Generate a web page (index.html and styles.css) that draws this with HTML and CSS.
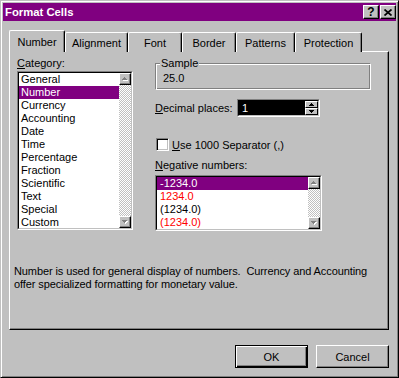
FILE: index.html
```html
<!doctype html>
<html lang="en">
    <head>
        <meta charset="UTF-8" />
        <title>Format Cells</title>
        <link rel="stylesheet" href="styles.css">
    </head>
    <body>
        <div class="window">
            <!-- Title bar -->
            <div class="titlebar">
                <span class="title">Format Cells</span>
                <div class="title-buttons">
                    <button class="title-btn help">?</button>
                    <button class="title-btn">
                        <svg width="8" height="7" viewBox="0 0 8 7">
                            <path d="M0.5 0.5 L7.5 6.5 M7.5 0.5 L0.5 6.5" stroke="#000" stroke-width="1.7" />
                        </svg>
                    </button>
                </div>
            </div>

            <div class="dialog-body">
                <!-- Tabs -->
                <div class="tabs">
                    <div class="tab selected w-number">Number</div>
                    <div class="tab w-alignment">Alignment</div>
                    <div class="tab w-font">Font</div>
                    <div class="tab w-border">Border</div>
                    <div class="tab w-patterns">Patterns</div>
                    <div class="tab w-protection">Protection</div>
                </div>

                <div class="panel">
                    <div class="panel-main">
                        <!-- Category list -->
                        <div class="left-col">
                            <div class="label"><u>C</u>ategory:</div>
                            <div class="listbox category">
                                <div class="listbox-in">
                                    <div class="items">
                                        <div class="item">General</div>
                                        <div class="item active">Number</div>
                                        <div class="item">Currency</div>
                                        <div class="item">Accounting</div>
                                        <div class="item">Date</div>
                                        <div class="item">Time</div>
                                        <div class="item">Percentage</div>
                                        <div class="item">Fraction</div>
                                        <div class="item">Scientific</div>
                                        <div class="item">Text</div>
                                        <div class="item">Special</div>
                                        <div class="item">Custom</div>
                                    </div>
                                    <div class="scrollbar">
                                        <div class="sb-btn">
                                            <svg width="7" height="5" viewBox="0 0 7 5">
                                                <path d="M3 1h1v1h1v1h1v1H1V3h1V2h1z" fill="#fff" />
                                                <path d="M2 0h1v1h1v1h1v1H0V2h1V1h1z" fill="#808080" />
                                            </svg>
                                        </div>
                                        <div class="sb-track"></div>
                                        <div class="sb-btn">
                                            <svg width="7" height="5" viewBox="0 0 7 5">
                                                <path d="M1 1h5v1H5v1H4v1H3V3H2V2H1z" fill="#fff" />
                                                <path d="M0 0h5v1H4v1H3v1H2V2H1V1H0z" fill="#808080" />
                                            </svg>
                                        </div>
                                    </div>
                                </div>
                            </div>
                        </div>

                        <!-- Options -->
                        <div class="right-col">
                            <div class="sample">
                                <span class="sample-label">Sample</span>
                                <div class="sample-value">25.0</div>
                            </div>

                            <div class="decimal-row">
                                <span class="decimal-label"><u>D</u>ecimal places:</span>
                                <div class="spinner">
                                    <div class="spinner-in">
                                        <div class="spin-value">1</div>
                                        <div class="spin-buttons">
                                            <div class="spin-btn">
                                                <svg width="5" height="3" viewBox="0 0 5 3">
                                                    <path d="M2 0h1v1h1v1h1v1H0V2h1V1h1z" fill="#000" />
                                                </svg>
                                            </div>
                                            <div class="spin-btn">
                                                <svg width="5" height="3" viewBox="0 0 5 3">
                                                    <path d="M0 0h5v1H4v1H3v1H2V2H1V1H0z" fill="#000" />
                                                </svg>
                                            </div>
                                        </div>
                                    </div>
                                </div>
                            </div>

                            <div class="check-row">
                                <div class="checkbox"></div>
                                <span><u>U</u>se 1000 Separator (,)</span>
                            </div>

                            <div class="label neg-label"><u>N</u>egative numbers:</div>
                            <div class="listbox negative">
                                <div class="listbox-in">
                                    <div class="items">
                                        <div class="item active">-1234.0</div>
                                        <div class="item red">1234.0</div>
                                        <div class="item">(1234.0)</div>
                                        <div class="item red">(1234.0)</div>
                                    </div>
                                    <div class="scrollbar">
                                        <div class="sb-btn">
                                            <svg width="7" height="5" viewBox="0 0 7 5">
                                                <path d="M3 1h1v1h1v1h1v1H1V3h1V2h1z" fill="#fff" />
                                                <path d="M2 0h1v1h1v1h1v1H0V2h1V1h1z" fill="#808080" />
                                            </svg>
                                        </div>
                                        <div class="sb-track"></div>
                                        <div class="sb-btn">
                                            <svg width="7" height="5" viewBox="0 0 7 5">
                                                <path d="M1 1h5v1H5v1H4v1H3V3H2V2H1z" fill="#fff" />
                                                <path d="M0 0h5v1H4v1H3v1H2V2H1V1H0z" fill="#808080" />
                                            </svg>
                                        </div>
                                    </div>
                                </div>
                            </div>
                        </div>
                    </div>

                    <p class="description">
                        Number is used for general display of numbers.&nbsp; Currency and Accounting<br />
                        offer specialized formatting for monetary value.
                    </p>
                </div>

                <!-- Buttons -->
                <div class="actions">
                    <button class="btn default">OK</button>
                    <button class="btn">Cancel</button>
                </div>
            </div>
        </div>
    </body>
</html>
```

FILE: styles.css
```css
body {
    margin: 0;
    padding: 0;
    font-family: "Liberation Sans", Arial, sans-serif;
    font-size: 11px;
    color: #000;
    background: #c0c0c0;
}
.window {
    width: 399px;
    height: 378px;
    box-sizing: border-box;
    background: #c0c0c0;
    border: 1px solid;
    border-color: #c0c0c0 #000 #000 #c0c0c0;
    box-shadow: inset 1px 1px #fff, inset -1px -1px #808080;
    padding: 2px;
}
.titlebar {
    height: 18px;
    background: #800080;
    color: #fff;
    display: flex;
    align-items: center;
    padding-left: 2px;
    padding-right: 0;
}
.title {
    font-weight: bold;
    font-size: 11.3px;
}
.title-buttons {
    margin-left: auto;
    display: flex;
    gap: 1px;
}
.title-btn {
    width: 16px;
    height: 14px;
    padding: 0;
    box-sizing: border-box;
    background: #c0c0c0;
    border: 1px solid;
    border-color: #fff #000 #000 #fff;
    box-shadow: inset -1px -1px #808080;
    display: flex;
    align-items: center;
    justify-content: center;
    font-family: "Liberation Sans", Arial, sans-serif;
    font-weight: bold;
    font-size: 12px;
    line-height: 12px;
    color: #000;
}
.dialog-body {
    padding: 9px 0 0 6px;
}

/* Tabs */
.tabs {
    display: flex;
    align-items: flex-end;
    height: 22px;
    margin-bottom: -1px;
}
.tab {
    box-sizing: border-box;
    height: 20px;
    padding-top: 4px;
    line-height: 13px;
    text-align: center;
    border-top: 1px solid #fff;
    border-left: 1px solid #fff;
    border-right: 1px solid #000;
    box-shadow: inset -1px 0 #808080;
    border-radius: 2px 2px 0 0;
    background: #c0c0c0;
}
.tab.selected {
    position: relative;
    z-index: 1;
    height: 22px;
    padding-top: 5px;
}
.w-number { width: 56px; }
.w-alignment { width: 63px; }
.w-font { width: 54px; }
.w-border { width: 54px; }
.w-patterns { width: 59px; }
.w-protection { width: 67px; }

.panel {
    width: 380px;
    height: 279px;
    box-sizing: border-box;
    border: 1px solid;
    border-color: #fff #000 #000 #fff;
    box-shadow: inset -1px -1px #808080;
}
.panel-main {
    display: flex;
    padding: 5px 0 0 7px;
}
.label {
    line-height: 13px;
}
.left-col {
    width: 116px;
}

/* Sunken list boxes */
.listbox {
    box-sizing: border-box;
    border: 1px solid;
    border-color: #808080 #fff #fff #808080;
}
.listbox-in {
    height: 100%;
    box-sizing: border-box;
    border: 1px solid;
    border-color: #000 #c0c0c0 #c0c0c0 #000;
    display: flex;
}
.category {
    margin-top: 1px;
    height: 159px;
}
.negative {
    margin-top: 3px;
    width: 167px;
    height: 56px;
}
.items {
    flex: 1;
    background: #fff;
    overflow: hidden;
}
.item {
    height: 13px;
    line-height: 13px;
    padding-left: 2px;
    white-space: nowrap;
}
.negative .item {
    padding-left: 3px;
}
.item.active {
    background: #800080;
    color: #fff;
}
.item.red {
    color: #f00;
}
.scrollbar {
    width: 12px;
    display: flex;
    flex-direction: column;
    background: repeating-conic-gradient(#c0c0c0 0 25%, #fff 0 50%) 0 0 / 2px 2px;
}
.sb-track {
    flex: 1;
}
.sb-btn {
    height: 12px;
    box-sizing: border-box;
    background: #c0c0c0;
    border: 1px solid;
    border-color: #fff #000 #000 #fff;
    box-shadow: inset -1px -1px #808080;
    display: flex;
    align-items: center;
    justify-content: center;
}

/* Right column */
.right-col {
    margin-left: 22px;
    width: 216px;
}
.sample {
    position: relative;
    margin-top: 6px;
    height: 27px;
    box-sizing: border-box;
    border: 1px solid;
    border-color: #808080 #fff #fff #808080;
    box-shadow: inset 1px 1px #fff, inset -1px -1px #808080;
    padding: 8px 0 0 7px;
}
.sample-label {
    position: absolute;
    top: -7px;
    left: 4px;
    padding: 0 1px;
    line-height: 13px;
    background: #c0c0c0;
}
.sample-value {
    line-height: 13px;
}
.decimal-row {
    display: flex;
    align-items: center;
    margin-top: 9px;
    height: 18px;
}
.decimal-label {
    width: 82px;
}
.spinner {
    width: 83px;
    height: 18px;
    box-sizing: border-box;
    border: 1px solid;
    border-color: #808080 #fff #fff #808080;
}
.spinner-in {
    height: 100%;
    box-sizing: border-box;
    border: 1px solid;
    border-color: #000 #c0c0c0 #c0c0c0 #000;
    background: #000;
    display: flex;
}
.spin-value {
    flex: 1;
    color: #fff;
    line-height: 14px;
    padding-left: 3px;
}
.spin-buttons {
    width: 13px;
    display: flex;
    flex-direction: column;
}
.spin-btn {
    height: 7px;
    box-sizing: border-box;
    background: #c0c0c0;
    border: 1px solid;
    border-color: #fff #000 #000 #fff;
    display: flex;
    align-items: center;
    justify-content: center;
}
.check-row {
    display: flex;
    align-items: center;
    margin-top: 21px;
    height: 13px;
    gap: 3px;
}
.checkbox {
    width: 13px;
    height: 13px;
    margin-left: 1px;
    box-sizing: border-box;
    background: #fff;
    border: 1px solid;
    border-color: #808080 #fff #fff #808080;
    box-shadow: inset 1px 1px #000, inset -1px -1px #c0c0c0;
}
.neg-label {
    margin-top: 8px;
}
.description {
    margin: 34px 0 0 4px;
    line-height: 13px;
    letter-spacing: -0.1px;
}

/* Bottom buttons */
.actions {
    display: flex;
    justify-content: flex-end;
    gap: 8px;
    width: 380px;
    margin-top: 15px;
}
.btn {
    width: 73px;
    height: 23px;
    padding: 0;
    box-sizing: border-box;
    font-family: "Liberation Sans", Arial, sans-serif;
    font-size: 11px;
    color: #000;
    background: #c0c0c0;
    border: 1px solid;
    border-color: #fff #000 #000 #fff;
    box-shadow: inset -1px -1px #808080;
}
.btn.default {
    border-color: #000;
    box-shadow: inset 1px 1px #fff, inset -1px -1px #000, inset -2px -2px #808080;
}
```
